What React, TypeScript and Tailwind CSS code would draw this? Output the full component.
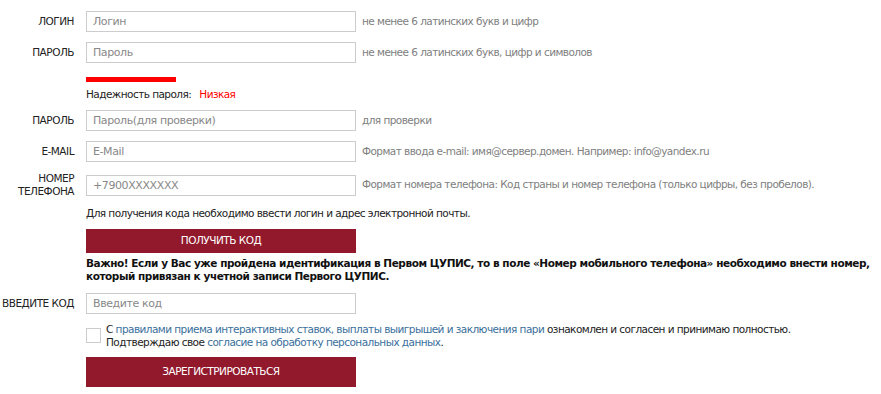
import React from "react";

const F = { fontFamily: '"DejaVu Sans", Verdana, sans-serif' } as React.CSSProperties;

function Row({ label, placeholder, hint, tall }: { label: React.ReactNode; placeholder: string; hint: string; tall?: boolean }) {
  return (
    <div className={`flex items-center ${tall ? "h-[26px]" : "h-[21px]"}`}>
      <div className="w-[86px] pr-[12px] text-right text-[10.5px] leading-[13px] tracking-[-0.5px] text-[#222]">{label}</div>
      <input
        placeholder={placeholder}
        className="w-[270px] h-[21px] border border-[#ccc] px-[6px] text-[11px] tracking-[-0.4px] placeholder:text-[#888] outline-none"
        style={F}
      />
      <div className="ml-[6px] text-[10.5px] tracking-[-0.55px] text-[#808080] whitespace-nowrap">{hint}</div>
    </div>
  );
}

export default function App() {
  return (
    <div className="w-[881px] h-[394px] bg-white overflow-hidden pt-[11px]" style={F}>
      <Row label="ЛОГИН" placeholder="Логин" hint="не менее 6 латинских букв и цифр" />
      <div className="mt-[10px]">
        <Row label="ПАРОЛЬ" placeholder="Пароль" hint="не менее 6 латинских букв, цифр и символов" />
      </div>
      <div className="ml-[86px] mt-[14px] w-[90px] h-[5px] bg-[#ff0000]" />
      <div className="ml-[86px] mt-[6px] h-[13px] text-[10.5px] leading-[13px] tracking-[-0.55px] text-[#222]">
        Надежность пароля:<span className="ml-[8px] text-[#ff0000]">Низкая</span>
      </div>
      <div className="mt-[9px]">
        <Row label="ПАРОЛЬ" placeholder="Пароль(для проверки)" hint="для проверки" />
      </div>
      <div className="mt-[10px]">
        <Row label="E-MAIL" placeholder="E-Mail" hint="Формат ввода e-mail: имя@сервер.домен. Например: info@yandex.ru" />
      </div>
      <div className="mt-[10px]">
        <Row
          tall
          label={
            <>
              НОМЕР
              <br />
              ТЕЛЕФОНА
            </>
          }
          placeholder="+7900XXXXXXX"
          hint="Формат номера телефона: Код страны и номер телефона (только цифры, без пробелов)."
        />
      </div>
      <div className="ml-[86px] mt-[9px] h-[13px] text-[10.5px] leading-[13px] tracking-[-0.55px] text-[#222]">
        Для получения кода необходимо ввести логин и адрес электронной почты.
      </div>
      <button className="ml-[86px] mt-[9px] w-[270px] h-[24px] bg-[#92182c] text-white text-[10.5px] tracking-[-0.5px] flex items-center justify-center">
        ПОЛУЧИТЬ КОД
      </button>
      <div className="ml-[86px] mt-[4px] text-[10.5px] leading-[13px] font-bold tracking-[-0.45px] text-[#111] whitespace-nowrap">
        Важно! Если у Вас уже пройдена идентификация в Первом ЦУПИС, то в поле «Номер мобильного телефона» необходимо внести номер,
        <br />
        который привязан к учетной записи Первого ЦУПИС.
      </div>
      <div className="mt-[10px]">
        <Row label={<span className="whitespace-nowrap">ВВЕДИТЕ КОД</span>} placeholder="Введите код" hint="" />
      </div>
      <div className="flex mt-[9px] ml-[86px]">
        <div className="mt-[5px] w-[15px] h-[15px] border border-[#ccc] bg-white shrink-0" />
        <div className="ml-[5px] text-[10.5px] leading-[13px] tracking-[-0.55px] text-[#222] whitespace-nowrap">
          С <span className="text-[#3a6f9c]">правилами приема интерактивных ставок, выплаты выигрышей и заключения пари</span> ознакомлен и согласен и принимаю полностью.
          <br />
          Подтверждаю свое <span className="text-[#3a6f9c]">согласие на обработку персональных данных</span>.
        </div>
      </div>
      <button className="ml-[86px] mt-[8px] w-[270px] h-[30px] bg-[#92182c] text-white text-[10.5px] tracking-[-0.5px] flex items-center justify-center">
        ЗАРЕГИСТРИРОВАТЬСЯ
      </button>
    </div>
  );
}
